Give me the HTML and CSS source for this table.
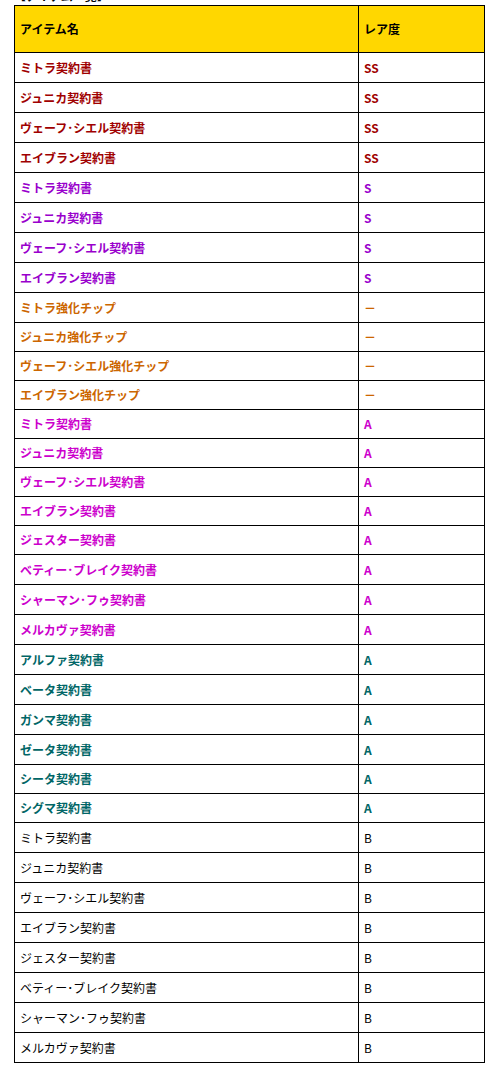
FILE: index.html
```html
<!DOCTYPE html>
<html lang="ja">
<head>
<meta charset="utf-8">
<title>アイテム一覧</title>
<link rel="stylesheet" href="styles.css">
</head>
<body>
<div class="cut"><div class="cut-text">【アイテム一覧】</div></div>
<table class="items">
  <thead>
    <tr class="head"><th class="c-name">アイテム名</th><th class="c-rare">レア度</th></tr>
  </thead>
  <tbody>
    <tr class="ss"><td>ミトラ契約書</td><td>SS</td></tr>
    <tr class="ss"><td>ジュニカ契約書</td><td>SS</td></tr>
    <tr class="ss"><td>ヴェーフ･シエル契約書</td><td>SS</td></tr>
    <tr class="ss"><td>エイブラン契約書</td><td>SS</td></tr>
    <tr class="s"><td>ミトラ契約書</td><td>S</td></tr>
    <tr class="s"><td>ジュニカ契約書</td><td>S</td></tr>
    <tr class="s"><td>ヴェーフ･シエル契約書</td><td>S</td></tr>
    <tr class="s"><td>エイブラン契約書</td><td>S</td></tr>
    <tr class="chip"><td>ミトラ強化チップ</td><td>－</td></tr>
    <tr class="chip short"><td>ジュニカ強化チップ</td><td>－</td></tr>
    <tr class="chip short"><td>ヴェーフ･シエル強化チップ</td><td>－</td></tr>
    <tr class="chip short"><td>エイブラン強化チップ</td><td>－</td></tr>
    <tr class="a short"><td>ミトラ契約書</td><td>A</td></tr>
    <tr class="a short"><td>ジュニカ契約書</td><td>A</td></tr>
    <tr class="a short"><td>ヴェーフ･シエル契約書</td><td>A</td></tr>
    <tr class="a short"><td>エイブラン契約書</td><td>A</td></tr>
    <tr class="a short"><td>ジェスター契約書</td><td>A</td></tr>
    <tr class="a"><td>ベティー･ブレイク契約書</td><td>A</td></tr>
    <tr class="a"><td>シャーマン･フゥ契約書</td><td>A</td></tr>
    <tr class="a"><td>メルカヴァ契約書</td><td>A</td></tr>
    <tr class="teal"><td>アルファ契約書</td><td>A</td></tr>
    <tr class="teal"><td>ベータ契約書</td><td>A</td></tr>
    <tr class="teal"><td>ガンマ契約書</td><td>A</td></tr>
    <tr class="teal"><td>ゼータ契約書</td><td>A</td></tr>
    <tr class="teal short"><td>シータ契約書</td><td>A</td></tr>
    <tr class="teal short"><td>シグマ契約書</td><td>A</td></tr>
    <tr class="b"><td>ミトラ契約書</td><td>B</td></tr>
    <tr class="b"><td>ジュニカ契約書</td><td>B</td></tr>
    <tr class="b"><td>ヴェーフ･シエル契約書</td><td>B</td></tr>
    <tr class="b"><td>エイブラン契約書</td><td>B</td></tr>
    <tr class="b"><td>ジェスター契約書</td><td>B</td></tr>
    <tr class="b"><td>ベティー･ブレイク契約書</td><td>B</td></tr>
    <tr class="b"><td>シャーマン･フゥ契約書</td><td>B</td></tr>
    <tr class="b"><td>メルカヴァ契約書</td><td>B</td></tr>
  </tbody>
</table>
</body>
</html>
```

FILE: styles.css
```css
html, body {
  margin: 0;
  padding: 0;
  background: #ffffff;
}
body {
  font-family: "Noto Sans CJK JP", "Noto Sans", sans-serif;
  font-size: 12px;
  color: #000000;
}
.cut {
  height: 4px;
  overflow: hidden;
  padding-left: 14px;
}
.cut-text {
  font-weight: bold;
  font-size: 12px;
  line-height: 14px;
  margin-top: -11px;
}
.items {
  border-collapse: collapse;
  margin: 1px 0 0 14px;
  width: 470px;
  table-layout: fixed;
}
.items th,
.items td {
  border: 1px solid #000000;
  padding: 0 0 0 5px;
  text-align: left;
  vertical-align: middle;
  font-size: 12px;
  line-height: 14px;
  height: 29px;
  box-sizing: border-box;
}
.c-name { width: 344px; }
.c-rare { width: 126px; }
.head th {
  background: #ffd700;
  font-weight: bold;
  height: 47px;
  color: #000000;
}
.items tr td { height: 30px; }
.items tr.short td { height: 29px; }
.ss td { color: #a00000; font-weight: bold; }
.s td { color: #9900cc; font-weight: bold; }
.chip td { color: #cc6600; font-weight: bold; }
.a td { color: #cc00cc; font-weight: bold; }
.teal td { color: #006666; font-weight: bold; }
.b td { color: #000000; font-weight: normal; }
```
